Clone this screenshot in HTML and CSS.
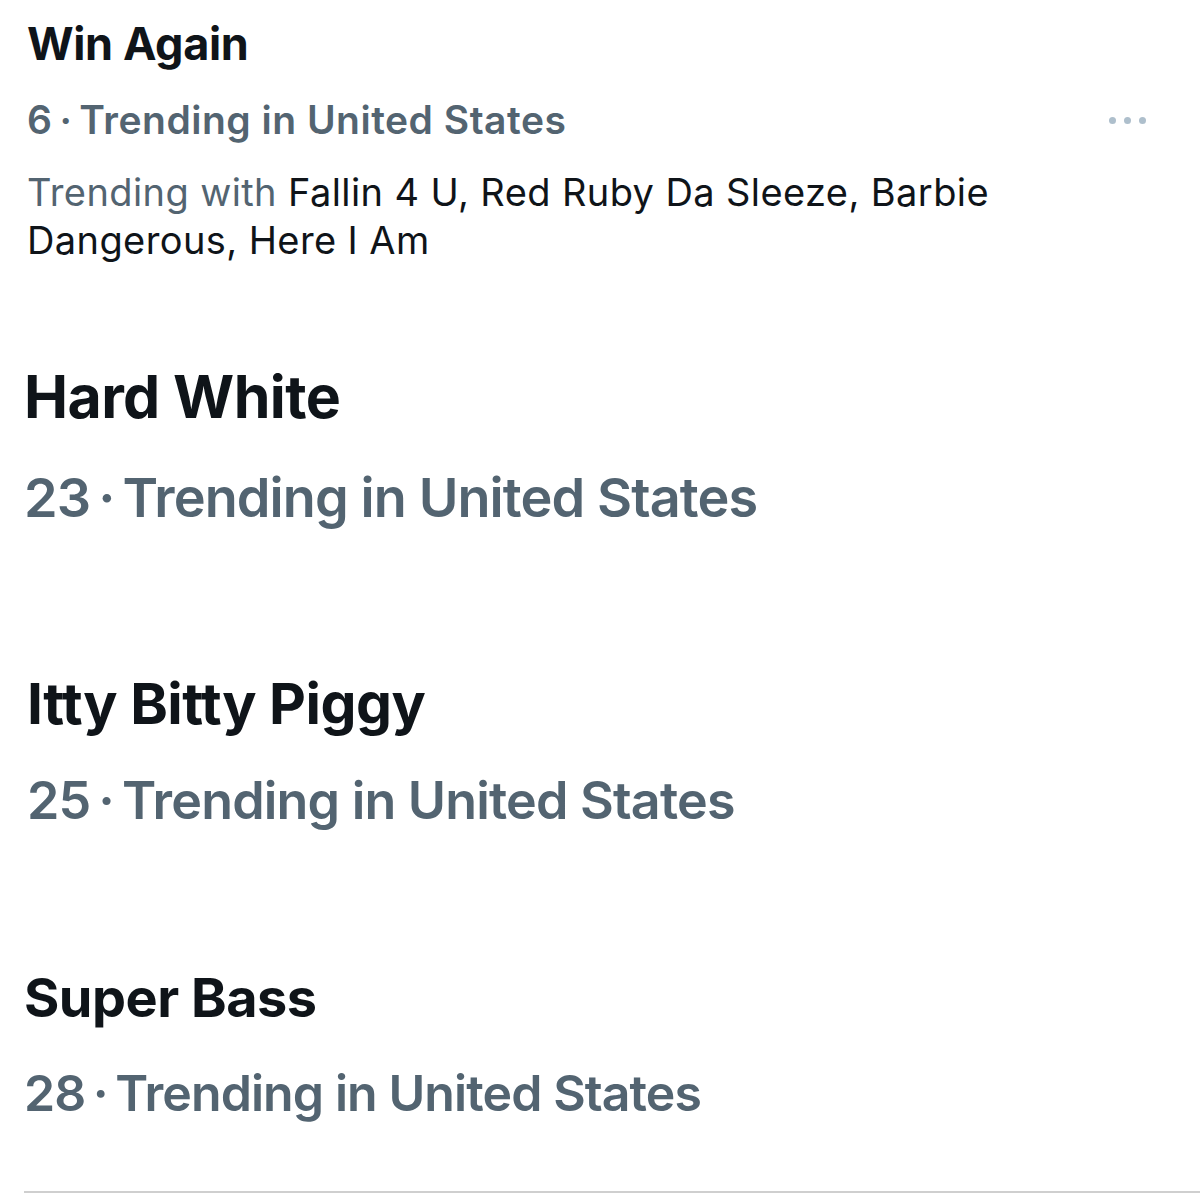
FILE: index.html
```html
<!DOCTYPE html>
<html lang="en">
<head>
<meta charset="utf-8">
<title>Trends</title>
<link rel="stylesheet" href="styles.css">
</head>
<body>
<main class="trends">
  <section class="trend trend-1">
    <div class="trend-body">
      <div class="title t1">Win Again</div>
      <div class="meta m1">6&#8201;·&#8201;Trending in United States</div>
      <div class="with">
        <div class="with-line"><span class="with-label">Trending with</span> <span class="with-names">Fallin 4 U, Red Ruby Da Sleeze, Barbie</span></div>
        <div class="with-line"><span class="with-names">Dangerous, Here I Am</span></div>
      </div>
    </div>
    <div class="more" aria-label="More"><span></span><span></span><span></span></div>
  </section>
  <section class="trend trend-2">
    <div class="title t2">Hard White</div>
    <div class="meta m2">23&#8201;·&#8201;Trending in United States</div>
  </section>
  <section class="trend trend-3">
    <div class="title t3">Itty Bitty Piggy</div>
    <div class="meta m3">25&#8201;·&#8201;Trending in United States</div>
  </section>
  <section class="trend trend-4">
    <div class="title t4">Super Bass</div>
    <div class="meta m4">28&#8201;·&#8201;Trending in United States</div>
  </section>
  <hr class="divider">
</main>
</body>
</html>
```
FILE: styles.css
```css
html, body {
  margin: 0;
  padding: 0;
  background: #ffffff;
}
body {
  font-family: Inter, "Noto Sans", Roboto, sans-serif;
  color: #0f1419;
  width: 1200px;
  height: 1200px;
  overflow: hidden;
}
.trends {
  padding-top: 19px;
}
.trend-1 {
  display: flex;
  justify-content: space-between;
  padding-left: 27px;
  padding-right: 54px;
}
.trend-2, .trend-4 { padding-left: 24px; }
.trend-3 { padding-left: 27px; }

.title {
  font-weight: 700;
  color: #0f1419;
  white-space: nowrap;
}
.meta {
  font-weight: 600;
  color: #536471;
  white-space: nowrap;
}
.t1 { font-size: 45px; line-height: 50px; letter-spacing: -0.4px; }
.m1 { font-size: 39px; line-height: 46px; margin-top: 28px; letter-spacing: 0.5px; }
.with {
  margin-top: 25px;
  font-size: 38px;
  line-height: 48px;
  letter-spacing: 0.4px;
  font-weight: 400;
}
.with-line { white-space: nowrap; }
.with-label { color: #536471; }
.with-names { color: #0f1419; }

.trend-2 { margin-top: 98px; }
.t2 { font-size: 59px; line-height: 70px; letter-spacing: -0.6px; }
.m2 { font-size: 54px; line-height: 64px; margin-top: 34px; letter-spacing: -0.9px; }

.trend-3 { margin-top: 139px; }
.t3 { font-size: 57px; line-height: 70px; letter-spacing: -0.5px; }
.m3 { font-size: 52px; line-height: 64px; margin-top: 30px; letter-spacing: -0.8px; }

.trend-4 { margin-top: 132px; }
.t4 { font-size: 54px; line-height: 66px; letter-spacing: -0.5px; }
.m4 { font-size: 50px; line-height: 62px; margin-top: 31px; letter-spacing: -0.9px; }

.more {
  display: flex;
  gap: 8px;
  margin-top: 98px;
  height: 8px;
}
.more span {
  width: 7px;
  height: 7px;
  border-radius: 50%;
  background: #aebfcc;
}
.divider {
  margin: 67px 0 0 24px;
  border: 0;
  height: 2px;
  background: #cfcfcf;
}
```
